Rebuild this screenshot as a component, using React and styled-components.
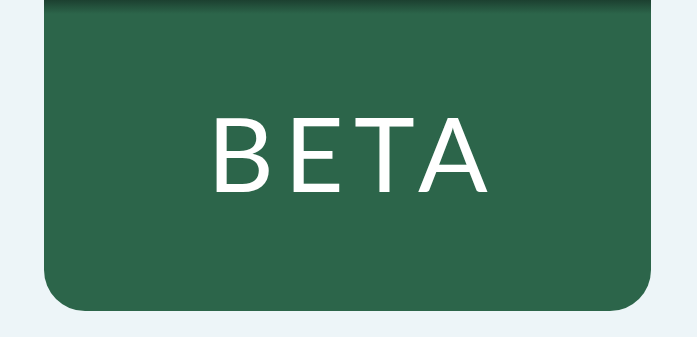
import React from 'react';
import styled, { createGlobalStyle } from 'styled-components';

const GlobalStyle = createGlobalStyle`
  body {
    margin: 0;
    background: #edf5f8;
    font-family: Lato, "Open Sans", sans-serif;
  }
`;

const Page = styled.div`
  padding: 0 46px 0 44px;
  height: 337px;
  box-sizing: border-box;
`;

const Banner = styled.div`
  height: 311px;
  display: flex;
  align-items: center;
  justify-content: center;
  background: linear-gradient(#1c4030 0, #2c654a 14px, #2c654a 100%);
  border-radius: 0 0 41px 41px;
`;

const Label = styled.span`
  color: #fff;
  font-size: 103px;
  font-weight: 400;
  letter-spacing: 0.1em;
  margin-right: -0.1em;
  line-height: 1;
  padding-bottom: 7px;
`;

export default function App() {
  return (
    <>
      <GlobalStyle />
      <Page>
        <Banner>
          <Label>BETA</Label>
        </Banner>
      </Page>
    </>
  );
}
